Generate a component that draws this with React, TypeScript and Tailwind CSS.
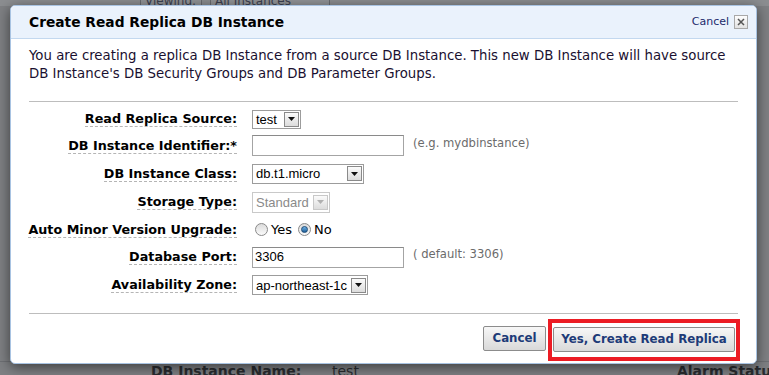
import React from "react";

const font = { fontFamily: '"DejaVu Sans", Verdana, sans-serif' };
const arial = { fontFamily: '"Liberation Sans", Arial, sans-serif' };

function Arrow({ disabled }: { disabled?: boolean }) {
  return (
    <div
      className={
        "flex h-[15px] w-[15px] items-center justify-center border bg-gradient-to-b from-[#fbfbfb] to-[#dcdcdc] " +
        (disabled ? "border-[#c8c8c8]" : "border-[#8a8a8a]")
      }
    >
      <svg width="7" height="4" viewBox="0 0 7 4">
        <polygon points="0,0 7,0 3.5,4" fill={disabled ? "#b0b0b0" : "#111"} />
      </svg>
    </div>
  );
}

function Select({ value, w, h, disabled }: { value: string; w: string; h: string; disabled?: boolean }) {
  return (
    <div
      className={
        "flex items-center justify-between border pl-[3px] pr-[1px] bg-white " +
        w +
        " " +
        h +
        (disabled ? " border-[#c9c9c9] text-[#8a8a8a]" : " border-[#9c9c9c] text-black")
      }
      style={arial}
    >
      <span className="text-[13px] leading-none">{value}</span>
      <Arrow disabled={disabled} />
    </div>
  );
}

function Label({ children }: { children: React.ReactNode }) {
  return (
    <div className="flex justify-end">
      <span className="whitespace-nowrap border-b border-dashed border-[#b5b5b5] text-[12.75px] font-bold leading-[15px] text-black">
        {children}
      </span>
    </div>
  );
}

function Radio({ checked }: { checked?: boolean }) {
  return (
    <span className="flex h-[13px] w-[13px] items-center justify-center rounded-full border border-[#8a8a8a] bg-gradient-to-b from-[#dcdcdc] to-[#fafafa]">
      {checked && <span className="h-[7px] w-[7px] rounded-full bg-gradient-to-b from-[#6fb2e6] to-[#1d5f99] border border-[#1c4a76]" />}
    </span>
  );
}

export default function App() {
  const sideWords = ["Scan", "Bulkd", "Tables", "Options", "Nutri", "Prom", "DB Gr", "Scene", "Events", "Alert"];

  return (
    <div className="relative h-[375px] w-[769px] overflow-hidden bg-[#808284]" style={font}>
      {/* dimmed page underneath */}
      <div className="flex h-full flex-col">
        <div className="flex h-[6px] items-start gap-2 overflow-hidden bg-[#8c8e91] pl-[140px] text-[12px] leading-[12px] text-[#3c4150]">
          <div className="mt-[-6px] h-[12px] w-[62px] border border-[#6a6c70] bg-[#939598] pl-[4px]">Viewing:</div>
          <div className="mt-[-6px] h-[12px] w-[120px] border border-[#6a6c70] bg-[#939598] pl-[4px]">All Instances</div>
        </div>
        <div className="flex flex-1">
          <div className="flex w-[10px] flex-col items-end gap-[5px] overflow-hidden bg-[#8b8d90] pt-[34px] text-[14px] leading-[18px] text-[#3c4150]">
            {sideWords.map((w, i) => (
              <span key={i} className={"whitespace-nowrap " + (i === 0 ? "text-[#6e4a3a]" : "")}>
                {w}
              </span>
            ))}
          </div>
          <div className="flex flex-1 flex-col justify-end bg-[#7f8184]">
            <div className="flex h-[14px] items-start overflow-hidden whitespace-nowrap border-t border-[#6e7074] pl-[151px] text-[14px] font-bold leading-[18px] text-[#2a2c30]">
              <span className="w-[181px] shrink-0">DB Instance Name:</span>
              <span className="shrink-0 font-normal">test</span>
              <span className="ml-[318px] shrink-0">Alarm Status</span>
            </div>
          </div>
        </div>
      </div>

      {/* modal */}
      <div className="absolute left-[10px] top-[5px] flex h-[359px] w-[747px] flex-col overflow-hidden rounded-[5px] border border-[#a8c3e2] bg-white shadow-[0_3px_14px_rgba(0,0,0,0.55)]">
        <div className="flex h-[33px] shrink-0 items-center justify-between border-b border-[#c3d8ef] bg-[#eaf2fc] pl-[18px] pr-[8px]">
          <span className="text-[13.8px] font-bold text-black">Create Read Replica DB Instance</span>
          <div className="flex items-center gap-[5px]">
            <span className="text-[11px] text-[#1b2a6b]">Cancel</span>
            <span className="flex h-[14px] w-[14px] items-center justify-center border border-[#a8a8a8] bg-gradient-to-b from-[#fdfdfd] to-[#e2e2e2]">
              <svg width="8" height="8" viewBox="0 0 8 8">
                <path d="M1 1L7 7M7 1L1 7" stroke="#555" strokeWidth="1.5" />
              </svg>
            </span>
          </div>
        </div>

        <div className="flex flex-col px-[18px]">
          <p className="pt-[8px] text-[13.3px] leading-[18px] text-[#1a1030]">
            You are creating a replica DB Instance from a source DB Instance. This new DB Instance will have source
            <br />
            DB Instance's DB Security Groups and DB Parameter Groups.
          </p>
          <div className="mt-[18px] h-px bg-[#bdbdbd]" />

          <div className="mt-[4px] grid grid-cols-[208px_1fr] gap-x-[15px]">
            <div className="flex h-[26px] items-center justify-end">
              <Label>Read Replica Source:</Label>
            </div>
            <div className="flex h-[26px] items-center">
              <Select value="test" w="w-[49px]" h="h-[19px]" />
            </div>

            <div className="flex h-[27px] items-center justify-end">
              <Label>DB Instance Identifier:*</Label>
            </div>
            <div className="flex h-[27px] items-center gap-[9px]">
              <div className="h-[21px] w-[152px] border border-[#a4a4a4] border-t-[#8a8a8a] bg-white" />
              <span className="mb-[4px] text-[11.6px] text-[#6b6b6b]">(e.g. mydbinstance)</span>
            </div>

            <div className="flex h-[29px] items-center justify-end">
              <Label>DB Instance Class:</Label>
            </div>
            <div className="flex h-[29px] items-center">
              <Select value="db.t1.micro" w="w-[112px]" h="h-[20px]" />
            </div>

            <div className="flex h-[28px] items-center justify-end">
              <Label>Storage Type:</Label>
            </div>
            <div className="flex h-[28px] items-center">
              <Select value="Standard" w="w-[78px]" h="h-[21px]" disabled />
            </div>

            <div className="flex h-[27px] items-center justify-end">
              <Label>Auto Minor Version Upgrade:</Label>
            </div>
            <div className="flex h-[27px] items-center pl-[3px] text-[13px] text-black">
              <Radio />
              <span className="ml-[3px] mr-[6px]">Yes</span>
              <Radio checked />
              <span className="ml-[3px]">No</span>
            </div>

            <div className="flex h-[28px] items-center justify-end">
              <Label>Database Port:</Label>
            </div>
            <div className="flex h-[28px] items-center gap-[9px]">
              <div
                className="flex h-[21px] w-[152px] items-center border border-[#a4a4a4] border-t-[#8a8a8a] bg-white pl-[2px] text-[13px] text-black"
                style={arial}
              >
                3306
              </div>
              <span className="mb-[4px] text-[11.6px] text-[#6b6b6b]">( default: 3306)</span>
            </div>

            <div className="flex h-[28px] items-center justify-end">
              <Label>Availability Zone:</Label>
            </div>
            <div className="flex h-[28px] items-center">
              <Select value="ap-northeast-1c" w="w-[116px]" h="h-[20px]" />
            </div>
          </div>

          <div className="mt-[14px] h-px bg-[#bdbdbd]" />

          <div className="flex items-start justify-end gap-[2px]">
            <button className="mt-[12px] h-[25px] w-[63px] rounded-[2px] border border-[#8c8c8c] bg-gradient-to-b from-[#f7f7f7] to-[#d9d9d9] text-[11.8px] font-bold text-[#1d3b78]">
              Cancel
            </button>
            <div className="mr-[-2px] mt-[5px] border-[4px] border-[#ec1c24] px-[1px] pb-[5px] pt-[3px]">
              <button className="h-[25px] w-[182px] rounded-[2px] border border-[#8c8c8c] bg-gradient-to-b from-[#f7f7f7] to-[#d9d9d9] text-[11.8px] font-bold text-[#1d3b78]">
                Yes, Create Read Replica
              </button>
            </div>
          </div>
        </div>
      </div>
    </div>
  );
}
